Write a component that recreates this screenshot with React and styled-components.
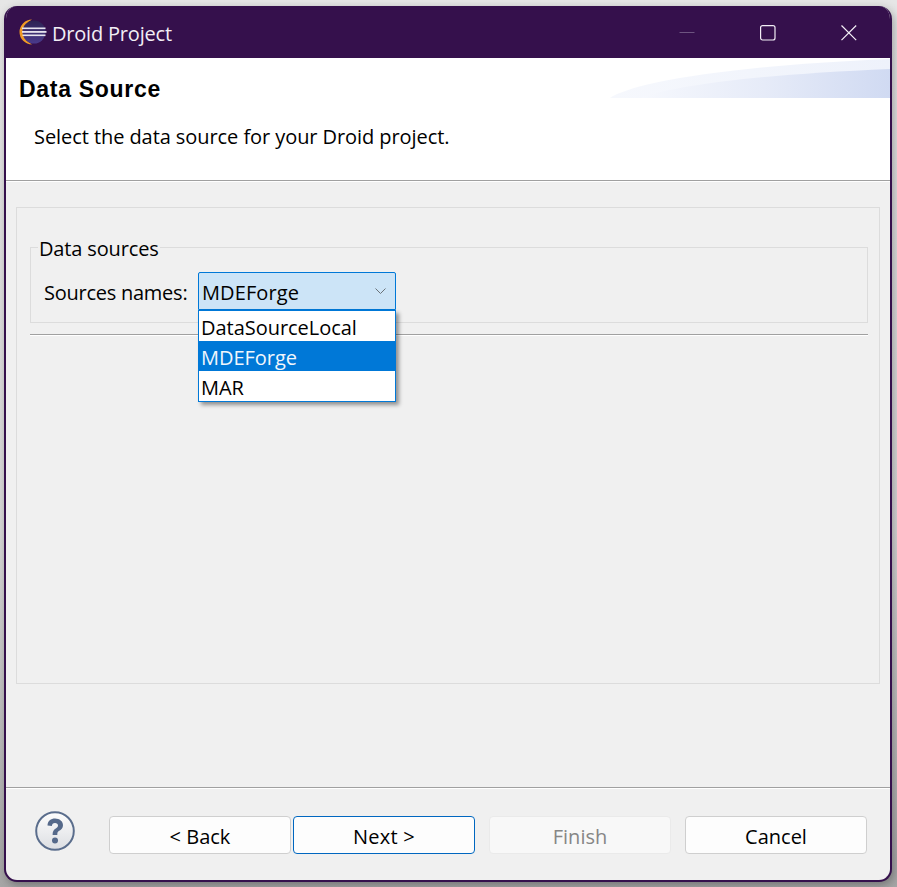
import React from 'react';
import styled, { createGlobalStyle } from 'styled-components';

const UI_FONT = '"Open Sans", "Noto Sans", sans-serif';

const GlobalStyle = createGlobalStyle`
    html, body {
        margin: 0;
        padding: 0;
        height: 887px;
        overflow: hidden;
        background: linear-gradient(to bottom, #e6e6e6 0, #d8d8d8 60%, #a6a6a6 100%);
    }
`;

const Page = styled.div`
    width: 897px;
    height: 887px;
    padding: 6px 5px 5px 4px;
    box-sizing: border-box;
    font-family: ${UI_FONT};
    font-size: 20px;
    color: #000;
`;

const Window = styled.div`
    display: flex;
    flex-direction: column;
    height: 876px;
    box-sizing: border-box;
    border: 2px solid #35104c;
    border-top: none;
    border-radius: 13px;
    overflow: hidden;
    background: #f0f0f0;
    box-shadow: 2px 3px 10px rgba(0, 0, 0, 0.3);
`;

const TitleBar = styled.div`
    display: flex;
    align-items: center;
    flex: 0 0 52px;
    margin: 0 -2px;
    padding: 0 3px 0 15px;
    background: #35104c;
    color: #fff;
`;

const TitleText = styled.span`
    margin-left: 5px;
    padding-top: 2px;
    font-size: 20px;
    letter-spacing: -0.2px;
    color: #f2eef5;
`;

const WindowButtons = styled.div`
    display: flex;
    margin-left: auto;
    height: 100%;
`;

const WindowButton = styled.div`
    display: flex;
    align-items: center;
    justify-content: center;
    width: 81px;
    height: 100%;
    padding-top: 1px;
    box-sizing: border-box;
`;

const Header = styled.div`
    position: relative;
    flex: 0 0 122px;
    background: #fff;
    padding: 15px 0 0 13px;
    box-sizing: border-box;
`;

const Banner = styled.svg`
    position: absolute;
    top: 0;
    right: 0;
`;

const PageTitle = styled.div`
    position: relative;
    font-family: "Liberation Sans", Arial, sans-serif;
    font-weight: 700;
    font-size: 23px;
    line-height: 32px;
    letter-spacing: 0.7px;
`;

const PageMessage = styled.div`
    margin: 19px 0 0 15px;
    line-height: 26px;
    letter-spacing: -0.07px;
`;

const Divider = styled.div`
    flex: 0 0 auto;
    height: 1px;
    background: #a0a0a0;
    border-bottom: 1px solid #fff;
`;

const Body = styled.div`
    flex: 1;
    display: flex;
    padding: 25px 10px 103px 10px;
    min-height: 0;
`;

const Panel = styled.div`
    position: relative;
    flex: 1;
    box-sizing: border-box;
    border: 1px solid #dcdcdc;
    padding: 24px 11px 0 13px;
`;

const Group = styled.fieldset`
    margin: 0;
    padding: 0;
    height: 91px;
    box-sizing: border-box;
    border: 1px solid #dcdcdc;
    min-width: 0;
`;

const GroupLegend = styled.legend`
    margin-left: 7px;
    padding: 4px 1px 0;
    line-height: 26px;
    letter-spacing: -0.15px;
`;

const FieldRow = styled.div`
    display: flex;
    align-items: center;
    margin-top: 10px;
    padding-left: 13px;
`;

const FieldLabel = styled.span`
    width: 154px;
    padding-top: 2px;
    letter-spacing: -0.25px;
`;

const ComboWrap = styled.div`
    position: relative;
    width: 198px;
`;

const Combo = styled.div`
    display: flex;
    align-items: center;
    justify-content: space-between;
    height: 38px;
    box-sizing: border-box;
    padding: 0 9px 0 3px;
    background: #cce4f7;
    border: 1px solid #0078d7;
    border-radius: 2px 2px 0 0;
`;

const ComboValue = styled.span`
    padding-top: 2px;
    letter-spacing: 0.1px;
`;

const Dropdown = styled.ul`
    position: absolute;
    top: 38px;
    left: 0;
    right: 0;
    z-index: 5;
    margin: 0;
    padding: 0;
    list-style: none;
    background: #fff;
    border: 1px solid #0078d7;
    box-shadow: 3px 3px 4px rgba(0, 0, 0, 0.4);
`;

const DropdownItem = styled.li`
    height: 30px;
    padding-left: 2px;
    line-height: 33px;
    letter-spacing: -0.03px;
    background: ${p => (p.$selected ? '#0078d7' : 'transparent')};
    color: ${p => (p.$selected ? '#f0f6fc' : '#000')};
`;

const Rule = styled.div`
    height: 1px;
    margin-top: 11px;
    background: #a0a0a0;
    border-bottom: 1px solid #fff;
`;

const Footer = styled.div`
    flex: 0 0 91px;
    display: flex;
    align-items: flex-start;
    padding: 27px 23px 0 29px;
    box-sizing: border-box;
`;

const HelpIcon = styled.svg`
    flex: 0 0 auto;
    margin-top: -5px;
    margin-right: 34px;
`;

const Button = styled.div`
    display: flex;
    align-items: center;
    justify-content: center;
    width: 182px;
    height: 38px;
    padding-top: 2px;
    box-sizing: border-box;
    border-radius: 4px;
    margin-left: ${p => p.$gap || 0}px;
    letter-spacing: ${p => (p.$primary ? '0.25px' : '0')};
    background: ${p => (p.$disabled ? '#f8f8f8' : '#fdfdfd')};
    border: 1px solid ${p => (p.$primary ? '#0067c0' : p.$disabled ? '#eaeaea' : '#cfcfcf')};
    color: ${p => (p.$disabled ? '#868686' : '#000')};
`;

const EclipseLogo = () => (
    <svg width="28" height="26" viewBox="0 0 28 26">
        <defs>
            <linearGradient id="orb" x1="0" y1="0" x2="0" y2="1">
                <stop offset="0" stopColor="#2d2352" />
                <stop offset="1" stopColor="#4a3a8c" />
            </linearGradient>
        </defs>
        <path d="M13 0.5 A12.5 12.5 0 0 0 13 25.5 A14 14 0 0 1 13 0.5 Z" fill="#f09a24" />
        <circle cx="15" cy="13" r="11.5" fill="url(#orb)" />
        <rect x="3" y="8.5" width="23.5" height="1.6" fill="#e6e3ee" />
        <rect x="3" y="12" width="24.5" height="1.8" fill="#e6e3ee" />
        <rect x="3.5" y="15.5" width="23" height="1.6" fill="#e6e3ee" />
    </svg>
);

const MinimizeGlyph = () => (
    <svg width="16" height="16" viewBox="0 0 16 16">
        <path d="M0.5 7.5 H15.5" stroke="#6d5480" strokeWidth="1" />
    </svg>
);

const MaximizeGlyph = () => (
    <svg width="16" height="16" viewBox="0 0 16 16">
        <rect x="0.6" y="0.6" width="14.4" height="14.4" rx="2" fill="none" stroke="#f2eef5" strokeWidth="1.2" />
    </svg>
);

const CloseGlyph = () => (
    <svg width="16" height="16" viewBox="0 0 16 16">
        <path d="M0.5 0.5 L15.2 15.2 M15.2 0.5 L0.5 15.2" stroke="#f2eef5" strokeWidth="1.2" />
    </svg>
);

const Chevron = () => (
    <svg width="11" height="6" viewBox="0 0 11 6">
        <path d="M0.5 0.5 L5.5 5.5 L10.5 0.5" fill="none" stroke="#6a7278" strokeWidth="1" />
    </svg>
);

const Help = () => (
    <HelpIcon width="40" height="40" viewBox="0 0 40 40">
        <defs>
            <linearGradient id="helpFill" x1="0" y1="0" x2="0" y2="1">
                <stop offset="0" stopColor="#fdfdfd" />
                <stop offset="1" stopColor="#dcdee2" />
            </linearGradient>
        </defs>
        <circle cx="20" cy="20" r="18.8" fill="url(#helpFill)" stroke="#5a6d8c" strokeWidth="2" />
        <path
            d="M12.5 14.5 C12.5 10 16 7.5 20 7.5 C24.5 7.5 28 10.3 28 14.2 C28 17.3 26 18.6 24.2 19.8 C22.6 20.9 22.3 21.6 22.3 24 H17.6 C17.6 20.8 18.4 19.2 20.4 17.8 C22 16.7 23 16 23 14.5 C23 13 21.8 12 20 12 C18 12 17 13.2 16.9 15 Z"
            fill="#55698a"
        />
        <circle cx="20" cy="29.5" r="3" fill="#55698a" />
    </HelpIcon>
);

const App = () => (
    <>
        <GlobalStyle />
        <Page>
            <Window>
                <TitleBar>
                    <EclipseLogo />
                    <TitleText>Droid Project</TitleText>
                    <WindowButtons>
                        <WindowButton><MinimizeGlyph /></WindowButton>
                        <WindowButton><MaximizeGlyph /></WindowButton>
                        <WindowButton><CloseGlyph /></WindowButton>
                    </WindowButtons>
                </TitleBar>
                <Header>
                    <Banner width="280" height="40" viewBox="0 0 280 40">
                        <defs>
                            <linearGradient id="bannerBack" x1="0" y1="0" x2="1" y2="0">
                                <stop offset="0" stopColor="#f6f8fd" />
                                <stop offset="1" stopColor="#eef2fb" />
                            </linearGradient>
                            <linearGradient id="bannerFront" x1="0" y1="0" x2="1" y2="0">
                                <stop offset="0" stopColor="#f6f8fd" />
                                <stop offset="0.5" stopColor="#e6ebf8" />
                                <stop offset="1" stopColor="#d0daf2" />
                            </linearGradient>
                        </defs>
                        <path d="M0 40 C20 26 110 8 280 1 V40 Z" fill="url(#bannerBack)" />
                        <path d="M30 40 C70 26 160 16 280 11 V40 Z" fill="url(#bannerFront)" />
                    </Banner>
                    <PageTitle>Data Source</PageTitle>
                    <PageMessage>Select the data source for your Droid project.</PageMessage>
                </Header>
                <Divider />
                <Body>
                    <Panel>
                        <Group>
                            <GroupLegend>Data sources</GroupLegend>
                            <FieldRow>
                                <FieldLabel>Sources names:</FieldLabel>
                                <ComboWrap>
                                    <Combo>
                                        <ComboValue>MDEForge</ComboValue>
                                        <Chevron />
                                    </Combo>
                                    <Dropdown>
                                        <DropdownItem>DataSourceLocal</DropdownItem>
                                        <DropdownItem $selected>MDEForge</DropdownItem>
                                        <DropdownItem>MAR</DropdownItem>
                                    </Dropdown>
                                </ComboWrap>
                            </FieldRow>
                        </Group>
                        <Rule />
                    </Panel>
                </Body>
                <Divider />
                <Footer>
                    <Help />
                    <Button>&lt; Back</Button>
                    <Button $primary $gap={2}>Next &gt;</Button>
                    <Button $disabled $gap={14}>Finish</Button>
                    <Button $gap={14}>Cancel</Button>
                </Footer>
            </Window>
        </Page>
    </>
);

export default App;
